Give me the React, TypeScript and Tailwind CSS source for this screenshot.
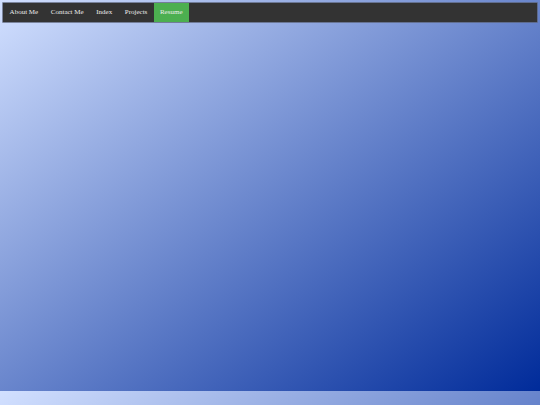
export default function App() {
  const links = ["About Me", "Contact Me", "Index", "Projects"];
  return (
    <div
      className="min-h-[405px] w-full bg-[linear-gradient(to_bottom_right,#d2e0ff,#002b9a)] bg-[length:100%_391px] bg-repeat px-[3.3px] pt-[3.3px]"
      style={{ fontFamily: '"Liberation Serif", "Times New Roman", serif' }}
    >
      <nav className="flex h-[19px] items-stretch bg-[#333333] shadow-[0_0_0_0.7px_#5a6276]">
        {links.map((l) => (
          <a
            key={l}
            className="flex items-center px-[6.3px] text-[7px] leading-none text-[#ececec]"
          >
            {l}
          </a>
        ))}
        <a className="flex items-center bg-[#4caf50] px-[6.3px] text-[7px] leading-none text-[#ececec]">
          Resume
        </a>
      </nav>
    </div>
  );
}
